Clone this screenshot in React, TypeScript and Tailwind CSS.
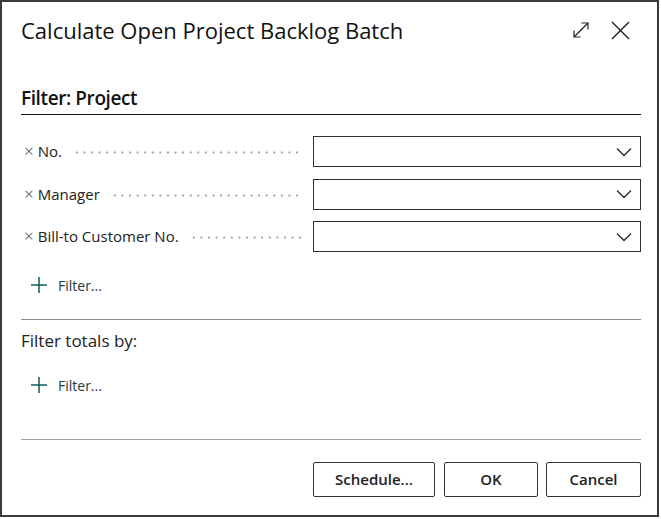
import React from "react";

const font = { fontFamily: '"Open Sans", "Noto Sans", Arial, sans-serif' };

function Chevron() {
  return (
    <svg width="16" height="10" viewBox="0 0 16 10" fill="none">
      <polyline points="1,1.5 8,8.5 15,1.5" stroke="#1b2a3a" strokeWidth="1.3" />
    </svg>
  );
}

function Row({ label }: { label: string }) {
  return (
    <div className="flex items-center h-[31px]">
      <div className="flex items-center w-[292px] pl-[3px] pr-[10px] h-full">
        <span className="text-[17px] text-[#444] leading-none mr-[4px] -mt-[2px] font-light">×</span>
        <span className="text-[15px] text-[#212121] whitespace-nowrap">{label}</span>
        <div className="flex-1 ml-[11px] h-[3px] mt-[2px] bg-[radial-gradient(circle,#a0a0a0_0.9px,transparent_1.3px)] bg-[length:7.6px_3px] bg-repeat-x"></div>
      </div>
      <div className="flex-1 h-full border border-[#2a2f36] flex items-center justify-end pr-[8px]">
        <Chevron />
      </div>
    </div>
  );
}

function AddFilter() {
  return (
    <div className="flex items-center h-[20px] pl-[9px]">
      <svg width="18" height="18" viewBox="0 0 18 18" fill="none">
        <line x1="9" y1="1" x2="9" y2="17" stroke="#0b5a5c" strokeWidth="1.5" />
        <line x1="1" y1="9" x2="17" y2="9" stroke="#0b5a5c" strokeWidth="1.5" />
      </svg>
      <span className="ml-[10px] text-[14px] text-[#1e3a3c]">Filter...</span>
    </div>
  );
}

export default function App() {
  return (
    <div className="w-[661px] h-[519px] bg-white" style={font}>
      <div className="w-[659px] h-[517px] border-2 border-[#3a3a3a] bg-white pl-[19px] pr-[16px] flex flex-col">
        <div className="flex items-center justify-between mt-[13px] h-[30px]">
          <span className="text-[22px] text-[#111] leading-[30px]">
            Calculate Open Project Backlog Batch
          </span>
          <div className="flex items-center gap-[21px] mr-[11px]">
            <svg width="18" height="18" viewBox="0 0 18 18" fill="none">
              <line x1="2" y1="16" x2="16" y2="2" stroke="#222" strokeWidth="1.2" />
              <polyline points="9.5,2 16,2 16,8.5" stroke="#222" strokeWidth="1.2" />
              <polyline points="2,9.5 2,16 8.5,16" stroke="#222" strokeWidth="1.2" />
            </svg>
            <svg width="19" height="19" viewBox="0 0 19 19" fill="none">
              <line x1="1" y1="1" x2="18" y2="18" stroke="#222" strokeWidth="1.5" />
              <line x1="18" y1="1" x2="1" y2="18" stroke="#222" strokeWidth="1.5" />
            </svg>
          </div>
        </div>
        <div className="mt-[41px] border-b border-[#111] pb-[4px]">
          <div className="text-[19px] leading-[24px] font-semibold text-[#111] tracking-[-0.4px]">
            Filter: Project
          </div>
        </div>
        <div className="mt-[21px] flex flex-col gap-[11.5px]">
          <Row label="No." />
          <Row label="Manager" />
          <Row label="Bill-to Customer No." />
        </div>
        <div className="mt-[23px]">
          <AddFilter />
        </div>
        <div className="mt-[24px] border-t border-[#8c8c8c]"></div>
        <div className="mt-[10px] text-[17px] leading-[22px] text-[#212121]">Filter totals by:</div>
        <div className="mt-[23px]">
          <AddFilter />
        </div>
        <div className="mt-[44px] border-t border-[#a0a0a0]"></div>
        <div className="mt-[22px] flex justify-end">
          <button className="w-[122px] h-[35px] border border-[#333] rounded-[2px] text-[15px] font-semibold text-[#212121] bg-white">
            Schedule...
          </button>
          <button className="ml-[9px] w-[94px] h-[35px] border border-[#333] rounded-[2px] text-[15px] font-semibold text-[#212121] bg-white">
            OK
          </button>
          <button className="ml-[8px] w-[95px] h-[35px] border border-[#333] rounded-[2px] text-[15px] font-semibold text-[#212121] bg-white">
            Cancel
          </button>
        </div>
      </div>
    </div>
  );
}
